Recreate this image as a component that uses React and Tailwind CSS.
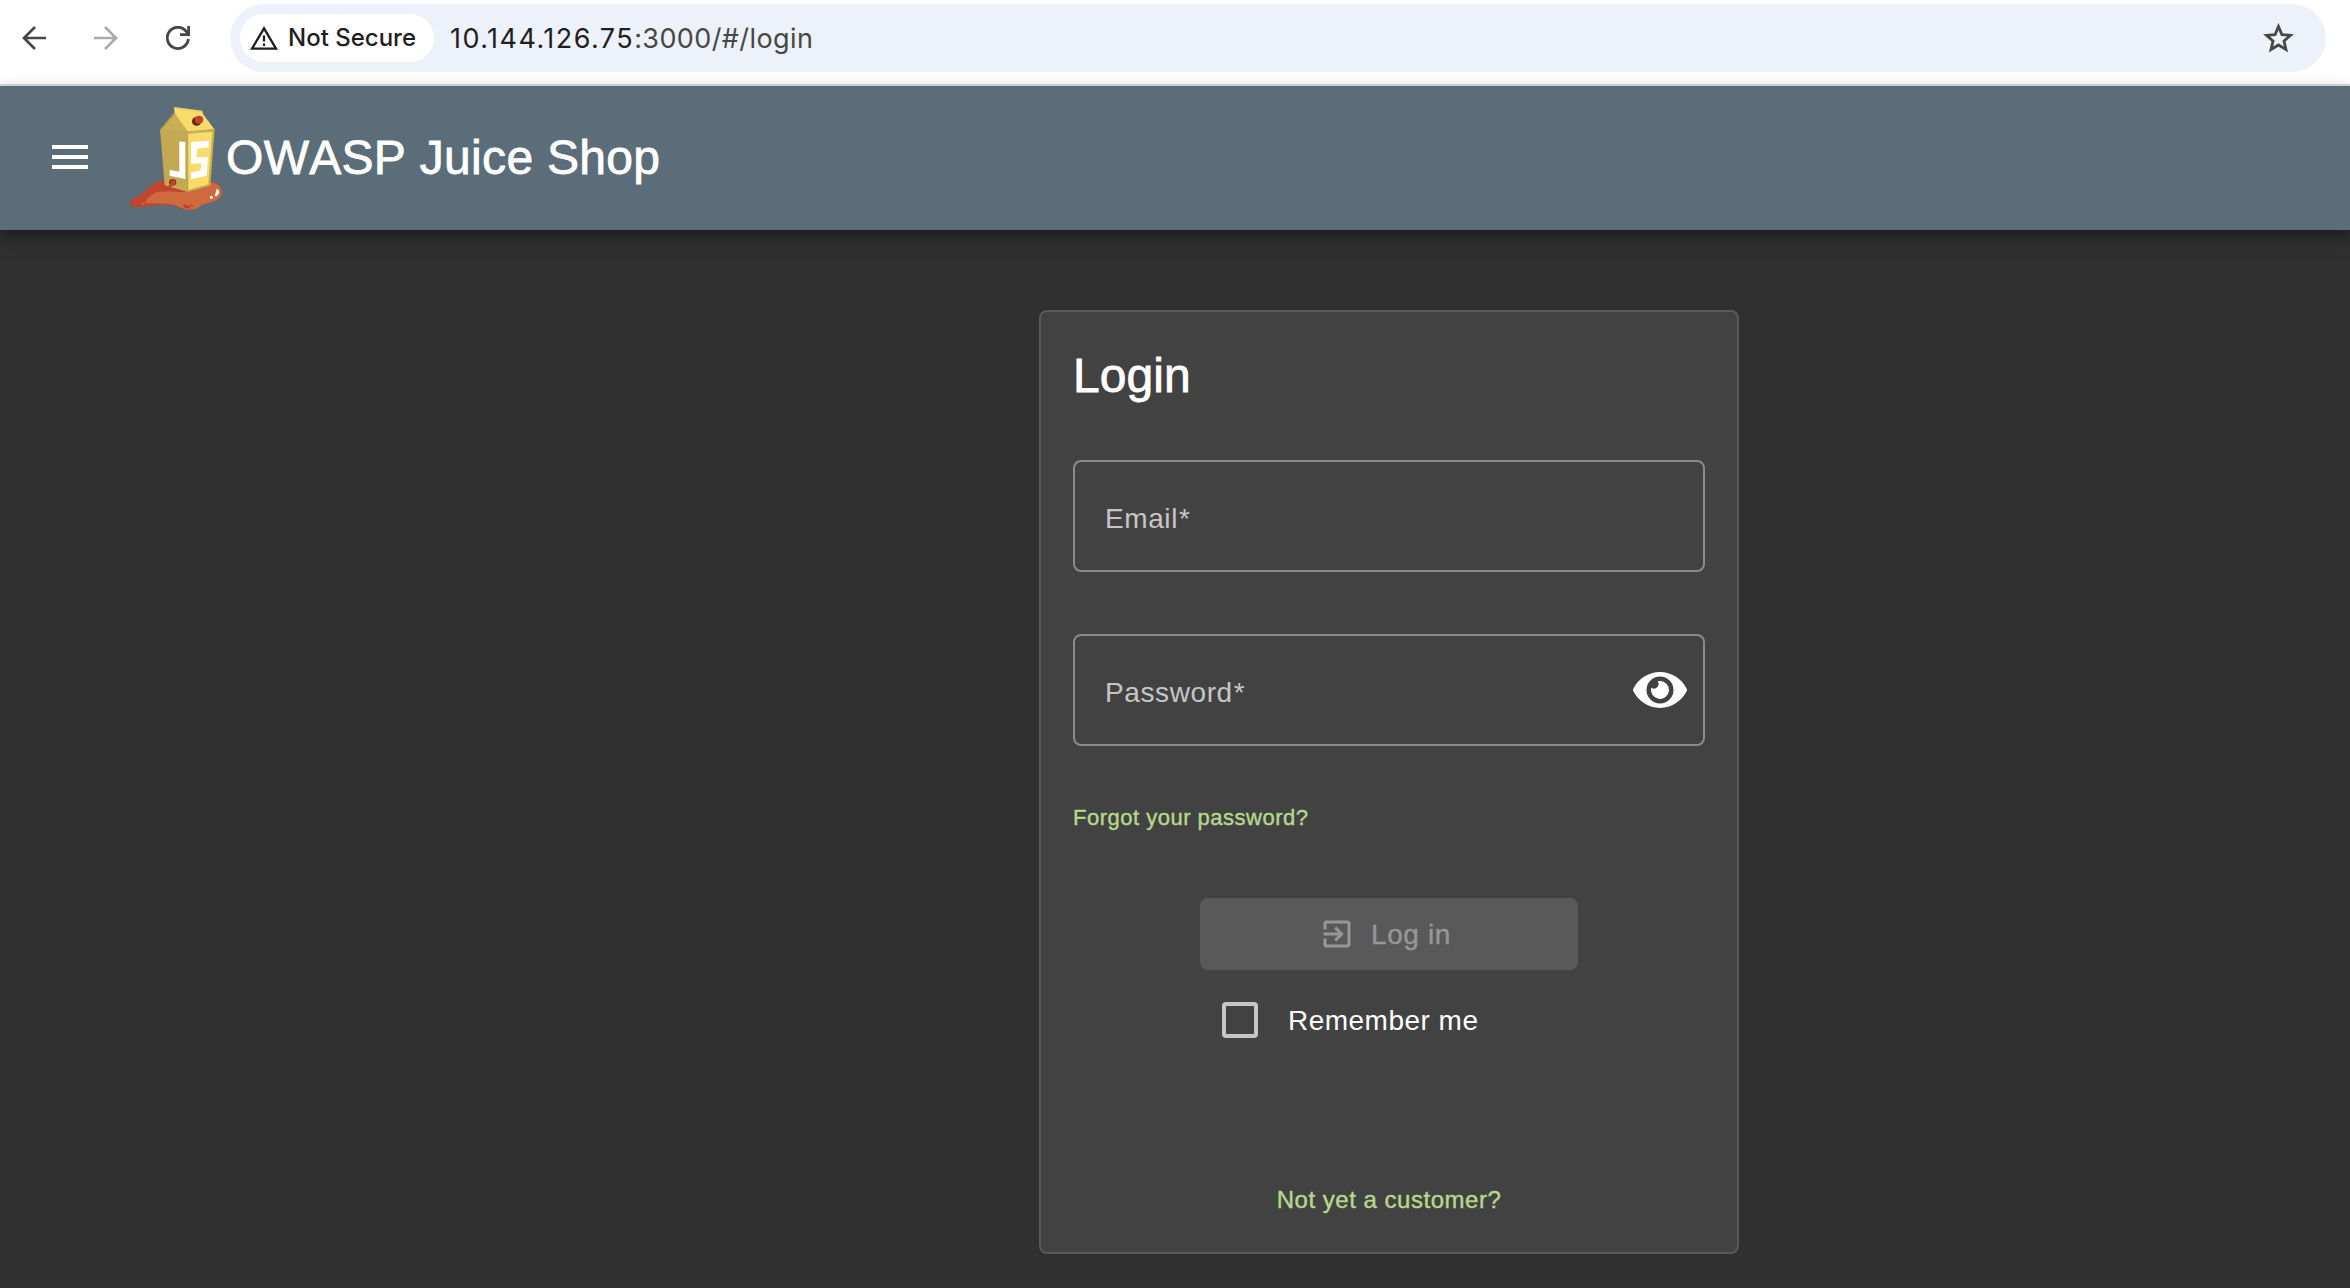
import React from "react";
import { FaEye } from "react-icons/fa";
import { MdExitToApp, MdMenu } from "react-icons/md";

function BrowserBar() {
  return (
    <div className="flex h-[86px] items-start border-b-2 border-[#dddfe0] bg-white pt-1">
      <div className="flex h-[68px] w-[230px] shrink-0 items-center gap-12 pl-[22px] text-[#474747]">
        <svg className="size-6 shrink-0" viewBox="0 0 24 24" fill="none" stroke="currentColor" strokeWidth="2.7">
          <path d="M24 12H2M13 1 2 12l11 11" />
        </svg>
        <svg className="size-6 shrink-0 text-[#ababab]" viewBox="0 0 24 24" fill="none" stroke="currentColor" strokeWidth="2.7">
          <path d="M0 12h22M11 1l11 11-11 11" />
        </svg>
        <svg className="size-6 shrink-0" viewBox="0 0 24 24" fill="none" stroke="currentColor" strokeWidth="2.8">
          <path d="M22.4 13A10.6 10.6 0 1 1 20.4 5.6L22.7 8.6M22.7 0v8.7H14" />
        </svg>
      </div>
      <div className="flex h-[68px] w-[2096px] items-center rounded-full bg-[#edf1f9] pl-2.5 pr-[32px] font-[Inter,sans-serif]">
        <div className="flex h-12 w-[194px] shrink-0 items-center rounded-full bg-white pl-2.5 text-[#1f1f1f]">
          <svg className="h-6 w-7 shrink-0" viewBox="0 0 28 24" fill="none" stroke="currentColor" strokeWidth="2.3">
            <path d="M2 22.7 14 2.3l12 20.400z" />
            <path d="M14 9.500v6M14 17.500v2.500" />
          </svg>
          <span className="ml-[10px] whitespace-nowrap text-[24px] font-medium leading-8">Not Secure</span>
        </div>
        <div className="ml-[16px] whitespace-nowrap pt-0.5 text-[27px] leading-9 tracking-[0.4px] text-[#474747]">
          <span className="tracking-[1.45px] text-[#1f1f1f]">10.144.126.75</span>:3000/#/login
        </div>
        <svg className="ml-auto h-[30px] w-[31px] shrink-0 text-[#474747]" viewBox="0 0 31 30" fill="none" stroke="currentColor" strokeWidth="2.800">
          <path d="M15.500 3.500 18.900 11.600 27.500 12.300 21 18 23 26.500 15.500 22 8 26.500 10 18 3.500 12.300 12.100 11.600z" />
        </svg>
      </div>
    </div>
  );
}

function JuiceLogo() {
  return (
    <svg className="ml-[34px] h-[105px] w-[95px] shrink-0" viewBox="294 45 285 315">
      <path fill="#c0452f" d="M300 336c4-17 25-18 42-32 14-13 25-32 64-37l130 5c23 0 40 14 39 31-2 30-30 27-56 38-14 6-20 16-40 16-24 0-34-15-68-15-42-1-64 6-89 6-15 1-23-4-22-12z" />
      <path fill="#cf6a3e" d="M344 336c15-26 34-36 66-36 10-6 9-15 20-20l105-6c24 0 41 13 40 30-2 29-30 26-56 37-14 6-20 15-40 15-24 0-34-16-70-18-24-2-42 1-65-2z" />
      <path fill="#c0452f" d="M404 290c14 1 30-2 40 2 14 5 24 9 24 11-22 2-46-5-62-1-10 2-14-3-2-12z" />
      <path fill="#b93d2a" d="M458 342c8-3 20 2 23 9-8 4-20 0-23-9zm17-1 16 2-5 4z" />
      <ellipse cx="340" cy="338" rx="4" ry="3" fill="#cf6a3e" />
      <path fill="#c3a952" d="M390 115 472 122 472 302 404 283z" />
      <path fill="#b8924a" d="M390 115 433 64 437 68 400 114z" />
      <path fill="#c8ae54" d="M437 66 472 124 394 116z" />
      <path fill="#f8dc6b" d="M432 48 517 59 519 69 553 115 473 123 434 66z" />
      <path fill="#c9ad52" d="M471 121 554 114 541 284 472 303z" />
      <path fill="#f8dc6b" d="M475 128 547 122 535 280 475 296z" />
      <path fill="#d9bd5b" d="M433 49 517 59 517 64 434 53z" opacity=".45" />
      <ellipse cx="500" cy="91" rx="14" ry="13" fill="#6f2118" />
      <ellipse cx="507" cy="86" rx="13" ry="12" fill="#c0452f" />
      <path fill="#fff" d="M448 151 466 153 466 264 419 254 419 236 448 242z" />
      <path fill="#fff" d="M483 153 537 149 536 169 501 173 500 199 534 198 530 254 483 264 483 245 512 238 514 217 483 218z" />
      <ellipse cx="428" cy="274" rx="11" ry="10" fill="#8e2f20" />
      <path fill="#c0452f" d="M423 271c6-6 13-2 14 4-6 8-10 10-18 15l-5-5c6-3 8-8 9-14z" />
      <path fill="#fff" d="M559 293c8 3 11 10 6 17-3 5-8 7-11 4 1-7 6-11 5-21z" />
      <circle cx="544" cy="319" r="4.500" fill="#fff" />
    </svg>
  );
}

function Header() {
  return (
    <header className="relative flex h-36 shrink-0 items-center bg-[#5a6d78] pl-[46px] text-white shadow-[0_4px_10px_rgba(0,0,0,0.25),0_8px_20px_rgba(0,0,0,0.22)]">
      <MdMenu className="mb-0.5 size-12 shrink-0" />
      <JuiceLogo />
      <h1 className="ml-[3px] whitespace-nowrap text-[48px] leading-[56px] tracking-[0.3px] [font-kerning:none] [-webkit-text-stroke:0.8px]">
        OWASP Juice Shop
      </h1>
    </header>
  );
}

function Field({ label, className = "", children }) {
  return (
    <div className={`flex h-28 items-center justify-between rounded-lg border-2 border-[#8b8b8b] pl-[30px] pr-4 ${className}`}>
      <span className="pt-1.5 text-[28px] leading-9 tracking-[0.6px] text-[#c6c6c6]">
        {label}
        <span className="ml-[1px]">*</span>
      </span>
      {children}
    </div>
  );
}

function LoginCard() {
  return (
    <main className="ml-[1039px] mt-20 flex h-[944px] w-[700px] flex-col rounded-lg border-2 border-[#595959] bg-[#424242] px-8 pt-9">
      <h2 className="text-[48px] leading-[56px] tracking-[0.05px] text-white [-webkit-text-stroke:0.8px]">Login</h2>
      <Field label="Email" className="mt-14" />
      <Field label="Password" className="mt-[62px]">
        <FaEye className="h-12 w-[54px] text-white" />
      </Field>
      <a className="mt-[58px] text-[22px] leading-7 tracking-[0.5px] text-[#b8d78b] [-webkit-text-stroke:0.4px]">Forgot your password?</a>
      <button className="mt-[66px] flex h-[72px] w-[378px] items-center self-center rounded-lg bg-[#595959] pl-[119px] text-[28px] leading-9 tracking-[0.6px] text-[#979797]">
        <MdExitToApp className="size-9" />
        <span className="ml-4 pt-0.5 [-webkit-text-stroke:0.4px]">Log in</span>
      </button>
      <label className="ml-[149px] mt-8 flex h-9 items-center text-[28px] leading-9 tracking-[0.48px] text-white">
        <span className="size-9 rounded border-4 border-[#c6c6c6]" />
        <span className="ml-[30px] pt-0.5">Remember me</span>
      </label>
      <a className="mt-[146px] self-center text-[24px] leading-8 tracking-[0.52px] text-[#b8d78b] [-webkit-text-stroke:0.4px]">Not yet a customer?</a>
    </main>
  );
}

export default function App() {
  return (
    <div className="flex h-[1288px] w-[2350px] flex-col overflow-hidden bg-[#303030] font-['Liberation_Sans',Arial,sans-serif]">
      <BrowserBar />
      <Header />
      <LoginCard />
    </div>
  );
}
